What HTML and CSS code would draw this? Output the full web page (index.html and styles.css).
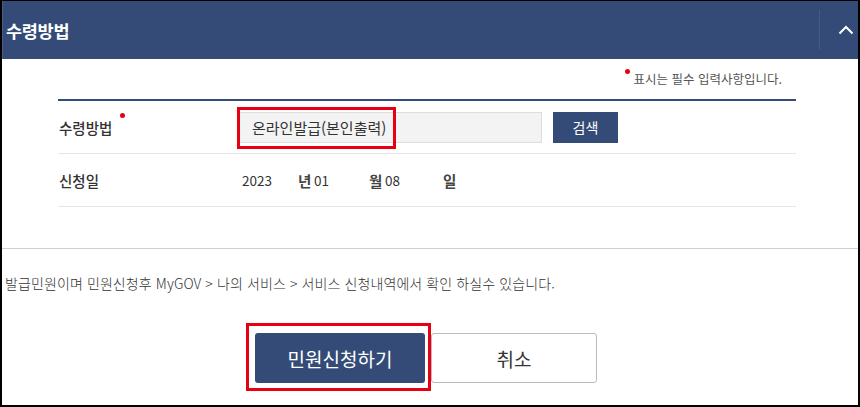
FILE: index.html
```html
<!DOCTYPE html>
<html lang="ko">
<head>
    <meta charset="UTF-8">
    <meta name="viewport" content="width=device-width, initial-scale=1.0">
    <title>수령방법</title>
    <link rel="stylesheet" href="styles.css">
</head>
<body>
    <div class="frame">
        <!-- Panel Header -->
        <div class="panel-head">
            <h2 class="panel-title">수령방법</h2>
            <div class="toggle-wrap">
                <button class="toggle-btn" aria-label="접기">
                    <svg width="16" height="10" viewBox="0 0 16 10"><path d="M1.5 8.5 L8 2 L14.5 8.5" fill="none" stroke="#fff" stroke-width="2"/></svg>
                </button>
            </div>
        </div>

        <!-- Form -->
        <div class="panel-body">
            <p class="required-note"><span class="req-dot"></span>표시는 필수 입력사항입니다.</p>

            <div class="form-table">
                <div class="form-row">
                    <div class="form-label">수령방법<span class="req-dot label-dot"></span></div>
                    <div class="form-field">
                        <div class="input-wrap">
                            <input type="text" class="text-input" value="온라인발급(본인출력)" readonly>
                            <span class="mark mark-input"></span>
                        </div>
                        <button class="btn-search">검색</button>
                    </div>
                </div>
                <div class="form-row">
                    <div class="form-label">신청일</div>
                    <div class="form-field date-field">
                        <span class="date-val year">2023</span><span class="unit">년</span>
                        <span class="date-val month">01</span><span class="unit">월</span>
                        <span class="date-val day">08</span><span class="unit">일</span>
                    </div>
                </div>
            </div>
        </div>

        <!-- Footer -->
        <div class="panel-foot">
            <p class="info-text">발급민원이며 민원신청후 MyGOV &gt; 나의 서비스 &gt; 서비스 신청내역에서 확인 하실수 있습니다.</p>
            <div class="button-group">
                <div class="btn-wrap">
                    <button class="btn-submit">민원신청하기</button>
                    <span class="mark mark-submit"></span>
                </div>
                <button class="btn-cancel">취소</button>
            </div>
        </div>
    </div>
</body>
</html>
```

FILE: styles.css
```css
/* General Styles */
* {
    box-sizing: border-box;
}

html, body {
    margin: 0;
    font-family: "Noto Sans CJK KR", "Noto Sans", sans-serif;
    background-color: #fff;
    color: #333;
}

/* Outer Frame */
.frame {
    width: 860px;
    height: 407px;
    border: 2px solid #000;
    border-top-width: 1px;
    overflow: hidden;
    display: flex;
    flex-direction: column;
}

/* Header */
.panel-head {
    height: 58px;
    flex-shrink: 0;
    display: flex;
    justify-content: space-between;
    align-items: center;
    background-color: #344b78;
    border-left: 1px solid #4a5f88;
}

.panel-title {
    margin: 0;
    padding-left: 3px;
    font-size: 17.5px;
    font-weight: 700;
    color: #fff;
    letter-spacing: -0.3px;
}

.toggle-wrap {
    height: 40px;
    width: 39px;
    display: flex;
    align-items: center;
    justify-content: center;
    border-left: 1px solid #45598a;
}

.toggle-btn {
    background: none;
    border: none;
    padding: 0;
    margin-left: 14px;
    display: flex;
    cursor: pointer;
}

/* Body */
.panel-body {
    padding: 0 62px 0 56px;
}

.required-note {
    margin: 0;
    height: 40px;
    display: flex;
    justify-content: flex-end;
    align-items: center;
    padding-right: 14px;
    padding-bottom: 2px;
    font-size: 12.5px;
    color: #555;
}

.req-dot {
    display: inline-block;
    width: 5px;
    height: 5px;
    border-radius: 50%;
    background-color: #e60012;
    margin-right: 4px;
    align-self: flex-start;
    margin-top: 10px;
}

.form-table {
    border-top: 2px solid #344b78;
}

.form-row {
    display: flex;
    align-items: center;
    height: 53px;
    border-bottom: 1px solid #e6e6e6;
}

.form-label {
    width: 180px;
    padding-left: 1px;
    font-size: 14.5px;
    font-weight: 500;
    color: #333;
    position: relative;
}

.label-dot {
    position: absolute;
    top: -4px;
    left: 62px;
    margin: 0;
}

.form-field {
    display: flex;
    align-items: center;
    gap: 10px;
}

/* Input */
.input-wrap {
    position: relative;
}

.text-input {
    width: 304px;
    height: 31px;
    padding: 0 13px;
    border: 1px solid #ddd;
    background-color: #f3f3f3;
    font-family: inherit;
    font-size: 15px;
    color: #333;
    outline: none;
}

.mark {
    position: absolute;
    border: 3px solid #e60012;
    pointer-events: none;
}

.mark-input {
    left: -1px;
    top: -5px;
    width: 159px;
    height: 42px;
}

.btn-search {
    width: 65px;
    height: 31px;
    margin-left: 1px;
    background-color: #344b78;
    color: #fff;
    border: none;
    font-family: inherit;
    font-size: 14px;
    cursor: pointer;
}

/* Date */
.date-field {
    gap: 0;
    padding-left: 4px;
}

.date-val {
    font-size: 13.5px;
    color: #333;
}

.year {
    width: 56px;
}

.month {
    width: 55px;
}

.day {
    width: 58px;
}

.unit {
    font-size: 14.5px;
    font-weight: 700;
    color: #444;
    width: 16px;
}

/* Footer */
.panel-foot {
    margin-top: 41px;
    border-top: 1px solid #d0d0d0;
}

.info-text {
    margin: 0;
    padding: 24px 0 0 3px;
    font-size: 14px;
    font-weight: 300;
    color: #333;
    letter-spacing: 0.1px;
}

.button-group {
    display: flex;
    justify-content: center;
    margin-top: 40px;
    padding-right: 8px;
    gap: 6px;
}

.btn-wrap {
    position: relative;
}

.btn-submit,
.btn-cancel {
    height: 50px;
    border-radius: 3px;
    font-family: inherit;
    font-size: 19px;
    cursor: pointer;
}

.btn-submit {
    width: 170px;
    background-color: #344b78;
    color: #fff;
    border: none;
}

.btn-cancel {
    width: 166px;
    background-color: #fff;
    color: #333;
    border: 1px solid #bbb;
}

.mark-submit {
    left: -9px;
    top: -10px;
    width: 185px;
    height: 68px;
}
```
